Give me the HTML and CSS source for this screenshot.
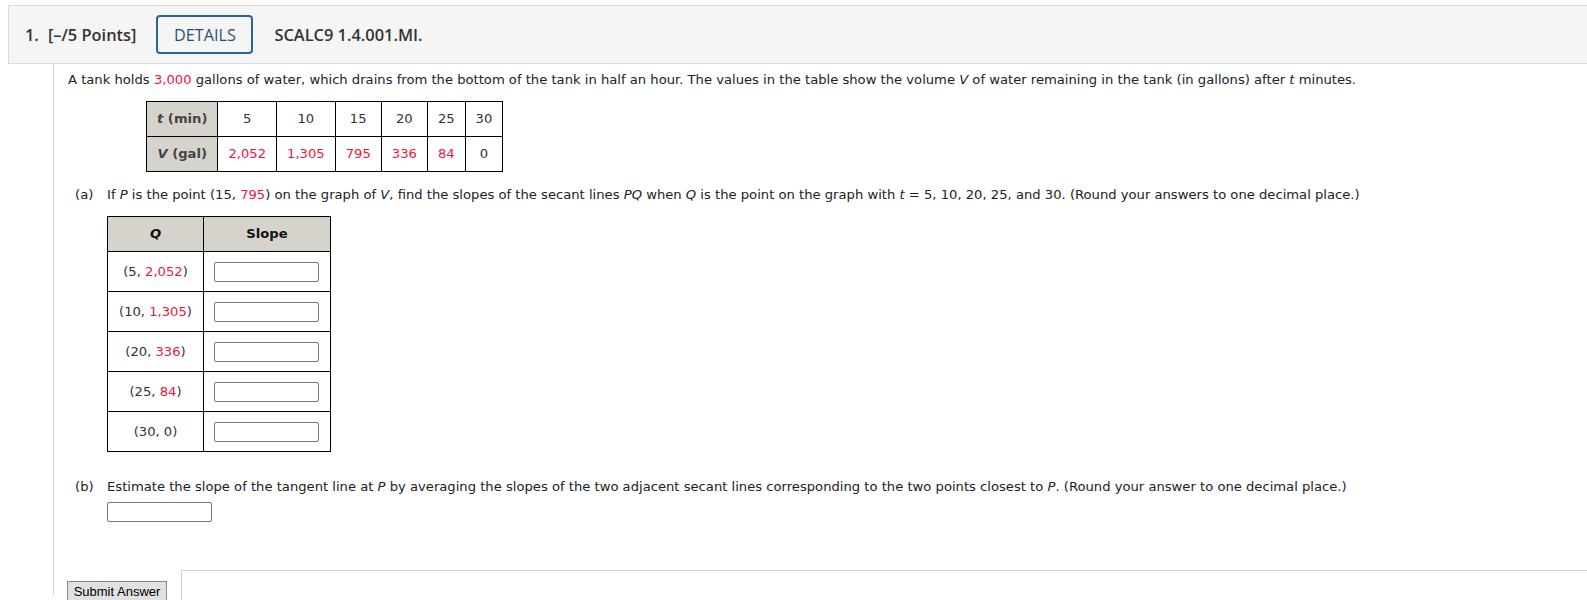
FILE: index.html
```html
<!DOCTYPE html>
<html>
<head>
<meta charset="utf-8">
<link rel="stylesheet" href="styles.css">
</head>
<body>
<div class="qhead">
  <span class="qnum">1.</span>
  <span class="pts">[–/5 Points]</span>
  <button class="details">DETAILS</button>
  <span class="qid">SCALC9 1.4.001.MI.</span>
</div>
<div class="qbody">
  <p class="intro">A tank holds <span class="red">3,000</span> gallons of water, which drains from the bottom of the tank in half an hour. The values in the table show the volume <i>V</i> of water remaining in the tank (in gallons) after <i>t</i> minutes.</p>
  <table class="data">
    <tr><th><i>t</i> (min)</th><td>5</td><td>10</td><td>15</td><td>20</td><td>25</td><td>30</td></tr>
    <tr><th><i>V</i> (gal)</th><td class="red">2,052</td><td class="red">1,305</td><td class="red">795</td><td class="red">336</td><td class="red">84</td><td>0</td></tr>
  </table>
  <div class="part part-a">
    <span class="plabel">(a)</span>
    <div class="pbody">
      <p class="ptext">If <i>P</i> is the point (15, <span class="red">795</span>) on the graph of <i>V</i>, find the slopes of the secant lines <i>PQ</i> when <i>Q</i> is the point on the graph with <i>t</i> = 5, 10, 20, 25, and 30. (Round your answers to one decimal place.)</p>
      <table class="slopes">
        <colgroup><col class="c1"><col class="c2"></colgroup>
        <tr><th><i>Q</i></th><th>Slope</th></tr>
        <tr><td>(5, <span class="red">2,052</span>)</td><td class="inp"><input type="text"></td></tr>
        <tr><td>(10, <span class="red">1,305</span>)</td><td class="inp"><input type="text"></td></tr>
        <tr><td>(20, <span class="red">336</span>)</td><td class="inp"><input type="text"></td></tr>
        <tr><td>(25, <span class="red">84</span>)</td><td class="inp"><input type="text"></td></tr>
        <tr><td>(30, 0)</td><td class="inp"><input type="text"></td></tr>
      </table>
    </div>
  </div>
  <div class="part part-b">
    <span class="plabel">(b)</span>
    <div class="pbody">
      <p class="ptext">Estimate the slope of the tangent line at <i>P</i> by averaging the slopes of the two adjacent secant lines corresponding to the two points closest to <i>P</i>. (Round your answer to one decimal place.)</p>
      <input type="text" class="binp">
    </div>
  </div>
  <div class="submit-row">
    <button class="submit">Submit Answer</button>
    <div class="feedback"></div>
  </div>
</div>
</body>
</html>
```
FILE: styles.css
```css
html, body { background: #fff; }
body {
  margin: 0;
  padding: 5px 0 0 8px;
  font-family: "DejaVu Sans", Verdana, sans-serif;
  font-size: 13.15px;
  color: #222;
  overflow: hidden;
  height: 595px;
}
.qhead {
  display: flex;
  align-items: center;
  height: 57px;
  border: 1px solid #dcdcdc;
  border-right: none;
  background: #f5f5f5;
  padding-left: 16px;
  font-family: "Open Sans", sans-serif;
  font-weight: 600;
  font-size: 16.4px;
  color: #333;
}
.qnum { margin-right: 9px; }
.details {
  margin: 0 21px 0 20px;
  width: 97px;
  height: 39px;
  border: 2px solid #2a6496;
  border-radius: 4px;
  background: transparent;
  font-family: "Open Sans", sans-serif;
  font-weight: 400;
  font-size: 16.2px;
  color: #2b4f73;
  padding: 0;
}
.qbody {
  margin-left: 45px;
  border-left: 1px solid #d4d4d4;
  padding-left: 14px;
  padding-top: 8px;
  height: 523px;
}
.intro { margin: 0; line-height: 16px; }
.red { color: #f0143c; }
i { font-style: italic; }
.data {
  margin: 13px 0 0 78px;
  border-collapse: collapse;
}
.data th, .data td {
  border: 1px solid #000;
  line-height: 34px;
  padding: 0 10px;
  text-align: center;
  color: #333;
  font-weight: normal;
}
.data th { background: #d6d3cc; font-weight: bold; color: #444; }
.data td.red { color: #f0143c; }
.part { display: flex; margin-left: 7px; }
.part-a { margin-top: 15px; }
.part-b { margin-top: 27px; }
.plabel { width: 32px; flex: none; line-height: 16px; }
.ptext { margin: 0; line-height: 16px; }
.slopes {
  margin-top: 13px;
  border-collapse: collapse;
}
.slopes .c1 { width: 96px; }
.slopes .c2 { width: 127px; }
.slopes th, .slopes td {
  border: 1px solid #000;
  text-align: center;
  color: #333;
}
.slopes th {
  background: #d6d3cc;
  line-height: 34px;
  padding: 0;
  font-weight: bold;
  color: #111;
}
.slopes td { padding: 0 8px; height: 39px; }
.slopes td.inp { padding: 0 10px; vertical-align: middle; }
input {
  display: block;
  box-sizing: border-box;
  width: 105px;
  height: 20px;
  border: 1px solid #767676;
  border-radius: 2px;
  padding: 0;
  margin: 0;
  background: #fff;
}
.binp { margin-top: 7px; }
.submit-row {
  display: flex;
  align-items: flex-start;
  margin-top: 48px;
  margin-left: -1px;
}
.submit {
  margin-top: 11px;
  width: 100px;
  height: 21px;
  padding: 0;
  font-family: "Liberation Sans", Arial, sans-serif;
  font-size: 13px;
  color: #000;
  background: #e1e1e1;
  border: 1px solid #8a8a8a;
  border-radius: 0;
}
.feedback {
  flex: 1;
  margin-left: 14px;
  height: 40px;
  border: 1px solid #cfcfcf;
  border-right: none;
}
```
